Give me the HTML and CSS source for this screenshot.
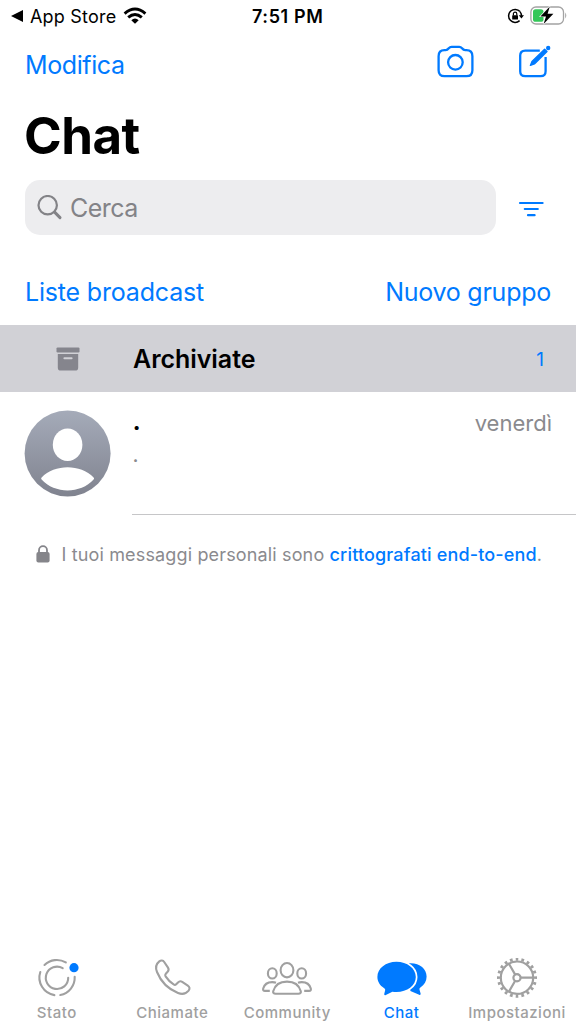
FILE: index.html
```
<!DOCTYPE html>
<html lang="it">

<head>
    <meta charset="UTF-8">
    <meta name="viewport" content="width=device-width, initial-scale=1.0">
    <title>Chat</title>

    <link rel="stylesheet" href="styles.css">
</head>

<body>
    <div class="main">
        <div class="status">
            <div class="status_left">
                <svg width="12" height="12" viewBox="0 0 12 12"><path d="M0 6L12 0V12Z" fill="#000"/></svg>
                <span class="back">App Store</span>
                <svg class="wifi" width="24" height="18" viewBox="0 0 24 18" fill="none" stroke="#000" stroke-width="2.9">
                    <path d="M1.6 6.6Q12 -2.6 22.4 6.6"/>
                    <path d="M5.2 10.4Q12 4.4 18.8 10.4"/>
                    <path d="M12 16.8L8.3 13.2Q12 10 15.7 13.2Z" fill="#000" stroke="none"/>
                </svg>
            </div>
            <span class="time">7:51 PM</span>
            <div class="status_right">
                <svg width="18" height="16" viewBox="0 0 18 16" fill="none" stroke="#000">
                    <path d="M13 3.6A6.5 6.5 0 1 0 12.6 12.6" stroke-width="1.5"/>
                    <path d="M13 3.6A6.5 6.5 0 0 1 14.4 8" stroke-width="1.5"/>
                    <path d="M11.8 7.2H17L14.4 10.4Z" fill="#000" stroke="none"/>
                    <rect x="5.2" y="7.2" width="5.8" height="4.3" rx="0.6" fill="#000" stroke="none"/>
                    <path d="M6.4 7.4V5.8a1.7 1.7 0 0 1 3.4 0V7.4" stroke-width="1.2"/>
                </svg>
                <svg width="38" height="20" viewBox="0 0 38 20">
                    <rect x="0.9" y="1" width="32.6" height="17" rx="5" fill="none" stroke="#a3a3a3" stroke-width="1.3"/>
                    <path d="M35.2 6.4Q37.4 9.4 35.2 12.4Z" fill="#a3a3a3"/>
                    <rect x="3" y="3.2" width="10.5" height="12.6" rx="2.6" fill="#34c759"/>
                    <path d="M19.8 0.4L10.4 10.4H16L13.6 18L23.4 7.8H17.6Z" fill="#000" stroke="#fff" stroke-width="1.2" paint-order="stroke"/>
                </svg>
            </div>
        </div>

        <div class="nav">
            <span class="link modifica">Modifica</span>
            <div class="nav_icons">
                <svg width="38" height="34" viewBox="0 0 38 34" fill="none" stroke="#007aff" stroke-width="2.3">
                    <path d="M7.4 5.2H8.6C10.4 5.2 10.8 4.6 11.8 3.2C12.6 2.2 13.3 1.8 14.6 1.8H22.2C23.5 1.8 24.2 2.2 25 3.2C26 4.6 26.4 5.2 28.2 5.2H29.4Q35.4 5.2 35.4 11.2V25.2Q35.4 31.2 29.4 31.2H7.4Q1.6 31.2 1.6 25.2V11.2Q1.6 5.2 7.4 5.2Z"/>
                    <circle cx="18.4" cy="17.3" r="7.3"/>
                </svg>
                <svg width="34" height="34" viewBox="0 0 34 34" fill="none" stroke="#007aff" stroke-width="2.3">
                    <path d="M21.8 5.6H7.2Q2.2 5.6 2.2 10.6V26.2Q2.2 31.2 7.2 31.2H22.6Q27.6 31.2 27.6 26.2V12"/>
                    <path d="M26.6 4.2L29 6.6L16.4 18.9L12.4 20.4L14 16.6Z" fill="#007aff" stroke-width="1.4" stroke-linejoin="round"/>
                    <circle cx="30.2" cy="3" r="2.2" fill="#007aff" stroke="none"/>
                </svg>
            </div>
        </div>

        <h1>Chat</h1>

        <div class="search_row">
            <div class="search">
                <svg width="26" height="26" viewBox="0 0 26 26" fill="none" stroke="#838387" stroke-width="2.2" stroke-linecap="round">
                    <circle cx="10.7" cy="10.2" r="9.2"/>
                    <path d="M17.6 17.1L23 22.6" stroke-width="3"/>
                </svg>
                <span class="placeholder">Cerca</span>
            </div>
            <svg class="filter" width="26" height="16" viewBox="0 0 26 16" fill="none" stroke="#007aff" stroke-width="2.2" stroke-linecap="round">
                <path d="M2 2H24.6M6.8 8H19.8M10 14.2H16.6"/>
            </svg>
        </div>

        <div class="links">
            <span class="link liste">Liste broadcast</span>
            <span class="link nuovo">Nuovo gruppo</span>
        </div>

        <div class="archive">
            <div class="archive_icon">
                <svg width="24" height="24" viewBox="0 0 24 24" fill="#85858d">
                    <rect x="0.5" y="0.4" width="23" height="5" rx="1.2"/>
                    <path fill-rule="evenodd" d="M1.8 7H22.2V20.4Q22.2 23.6 19 23.6H5Q1.8 23.6 1.8 20.4ZM8.4 10.3a1 1 0 0 0 0 2H15.6a1 1 0 0 0 0-2Z"/>
                </svg>
            </div>
            <span class="archive_name">Archiviate</span>
            <span class="archive_count">1</span>
        </div>

        <div class="chat">
            <svg class="avatar" width="86" height="86" viewBox="0 0 86 86">
                <defs>
                    <linearGradient id="grey" x1="0" y1="0" x2="0" y2="1">
                        <stop offset="0" stop-color="#a5abb9"/>
                        <stop offset="1" stop-color="#80838f"/>
                    </linearGradient>
                </defs>
                <circle cx="42.6" cy="43.4" r="43" fill="url(#grey)"/>
                <ellipse cx="42.6" cy="34.7" rx="14.8" ry="16.2" fill="#fff"/>
                <path d="M16.6 67.4Q15.6 68.3 16.6 69.5C29.6 84 55.6 84 68.6 69.5Q69.6 68.3 68.6 67.4C55.6 54 29.6 54 16.6 67.4Z" fill="#fff"/>
            </svg>
            <div class="chat_body">
                <div class="chat_text">
                    <span class="chat_name">.</span>
                    <span class="chat_last">.</span>
                </div>
                <span class="chat_date">venerdì</span>
            </div>
        </div>

        <div class="notice">
            <svg width="14" height="18" viewBox="0 0 14 18">
                <rect x="0.4" y="7" width="13.2" height="10.4" rx="2" fill="#85858a"/>
                <path d="M3 8V5.2a4 4 0 0 1 8 0V8" fill="none" stroke="#85858a" stroke-width="1.8"/>
            </svg>
            <span class="notice_text">I tuoi messaggi personali sono <b>crittografati end-to-end</b>.</span>
        </div>

        <div class="tabs">
            <div class="tab">
                <svg width="44" height="44" viewBox="0 0 44 44" fill="none" stroke="#a0a0a0" stroke-width="2.1" stroke-linecap="round">
                    <path d="M9.5 7A17.8 17.8 0 0 1 30.8 4.4"/>
                    <path d="M5.3 14A17.8 17.8 0 0 0 19.4 37.1"/>
                    <path d="M25.3 37A17.8 17.8 0 0 0 39.7 18.7"/>
                    <path d="M27.7 10.2A11.2 11.2 0 1 0 33.2 19.7"/>
                    <circle cx="39" cy="9.7" r="4.6" fill="#007aff" stroke="none"/>
                </svg>
                <span>Stato</span>
            </div>
            <div class="tab">
                <svg width="44" height="44" viewBox="0 0 44 44" fill="none" stroke="#a0a0a0" stroke-width="2.1" stroke-linejoin="round">
                    <path d="M9.3 3.4C11 2 13 2.2 14.2 4L18 9.6C19 11.2 18.8 12.5 17.6 13.8L15.8 15.7C15 16.6 15 17.4 15.6 18.4C17.8 21.8 20.2 24.2 23.6 26.4C24.6 27 25.4 27 26.2 26.2L28 24.4C29.3 23.1 30.6 22.8 32.2 23.8L37.8 27.6C39.8 29 40 30.8 38.6 32.6C35.8 36 32.4 36.8 28 35C18.6 31.2 10.8 23.4 7 14C5.2 9.6 5.8 6.2 9.3 3.4Z"/>
                </svg>
                <span>Chiamate</span>
            </div>
            <div class="tab">
                <svg width="52" height="44" viewBox="0 0 52 44" fill="none" stroke="#a0a0a0" stroke-width="2.1" stroke-linejoin="round">
                    <ellipse cx="26" cy="12.2" rx="6.4" ry="7.2"/>
                    <ellipse cx="11.3" cy="15.4" rx="4.4" ry="5.1"/>
                    <ellipse cx="40.7" cy="15.4" rx="4.4" ry="5.1"/>
                    <path d="M14.6 35.7H37.4Q40.4 35.7 39.8 33.3C38 26.7 33 23.6 26 23.6S14 26.7 12.2 33.3Q11.6 35.7 14.6 35.7Z"/>
                    <path d="M8.8 32.9H4Q1.6 32.9 2.2 30.5C3.4 26.1 6.8 24.1 11.2 24.1C12.7 24.1 14 24.3 15 24.7"/>
                    <path d="M43.2 32.9H48Q50.4 32.9 49.8 30.5C48.6 26.1 45.2 24.1 40.8 24.1C39.3 24.1 38 24.3 37 24.7"/>
                </svg>
                <span>Community</span>
            </div>
            <div class="tab active">
                <svg width="52" height="44" viewBox="0 0 52 44" fill="#007aff">
                    <path d="M33 5.4C43 4.6 50.6 10.4 50.6 18.6C50.6 23.2 48.4 27 44.4 29.6C43.4 30.3 43.4 31 43.6 32L44.6 35.6C44.8 36.8 44.2 37.3 43.2 36.8L34.4 33Z"/>
                    <path d="M20.4 3.8C31.2 3.8 39.8 10.4 39.8 19S31.2 34 20.4 34C19 34 17.6 33.9 16.4 33.7L9.8 37C8.6 37.5 8 36.9 8.3 35.8L9.1 32.4C9.3 31.4 9.1 30.8 8.2 30.2C3.8 27.4 1.4 23.6 1.4 19C1.4 10.4 9.8 3.8 20.4 3.8Z" stroke="#fff" stroke-width="3.4" paint-order="stroke"/>
                </svg>
                <span>Chat</span>
            </div>
            <div class="tab">
                <svg width="44" height="44" viewBox="0 0 44 44" fill="none" stroke="#a0a0a0" stroke-width="2.2">
                    <circle cx="22" cy="19.7" r="16.2"/>
                    <!-- gear teeth -->
                    <circle cx="22" cy="19.7" r="18.5" stroke-width="3" pathLength="200" stroke-dasharray="4.6 5.4" stroke-dashoffset="2.3"/>
                    <circle cx="22" cy="19.7" r="3.6"/>
                    <path d="M25.6 19.7H38.2M20.2 16.6L13.9 5.7M20.2 22.8L13.9 33.7"/>
                </svg>
                <span>Impostazioni</span>
            </div>
        </div>
    </div>
</body>

</html>
```
FILE: styles.css
```
* {
    box-sizing: border-box;
}

body {
    margin: 0;
    font-family: Inter, "Liberation Sans", sans-serif;
    background-color: #fff;
}

svg {
    display: block;
    flex-shrink: 0;
}

.main {
    width: 576px;
    height: 1024px;
    overflow: hidden;
    display: flex;
    flex-direction: column;
}

.status {
    height: 32px;
    padding: 0 8px 0 11px;
    display: grid;
    grid-template-columns: 241px auto 1fr;
    align-items: center;
}

.status_left {
    display: flex;
    align-items: center;
}

.back {
    font-size: 18px;
    letter-spacing: 0.2px;
    margin-left: 7px;
    width: 86px;
    white-space: nowrap;
}

.wifi {
    margin-left: 7px;
}

.time {
    font-size: 18px;
    font-weight: 600;
    letter-spacing: 0.6px;
}

.status_right {
    display: flex;
    justify-content: flex-end;
    align-items: center;
    gap: 5px;
}

.nav {
    height: 64px;
    padding: 2px 24px 0 25px;
    display: flex;
    justify-content: space-between;
    align-items: center;
}

.link {
    color: #007aff;
    font-size: 25px;
    white-space: nowrap;
}

.modifica {
    letter-spacing: -0.4px;
}

.liste {
    letter-spacing: -0.18px;
}

.nuovo {
    letter-spacing: -0.25px;
}

.nav_icons {
    display: flex;
    gap: 43px;
    margin-bottom: 6px;
}

h1 {
    margin: 0;
    padding-left: 24px;
    height: 84px;
    line-height: 80px;
    font-size: 51px;
    font-weight: 700;
    letter-spacing: -0.5px;
}

.search_row {
    height: 55px;
    padding: 0 32px 0 25px;
    display: flex;
    justify-content: space-between;
    align-items: center;
}

.search {
    width: 471px;
    height: 55px;
    padding-left: 12px;
    border-radius: 15px;
    background-color: #ededef;
    display: flex;
    align-items: center;
    gap: 7px;
}

.filter {
    margin-top: 3px;
}

.placeholder {
    font-size: 25px;
    letter-spacing: -0.5px;
    color: #838387;
}

.links {
    height: 90px;
    padding: 24px 25px 0;
    display: flex;
    justify-content: space-between;
    align-items: center;
}

.archive {
    height: 67px;
    padding-right: 32px;
    background-color: #d1d1d6;
    display: flex;
    align-items: center;
}

.archive_icon {
    width: 133px;
    padding-left: 55.5px;
}

.archive_name {
    flex: 1;
    font-size: 25px;
    font-weight: 600;
    letter-spacing: -0.05px;
}

.archive_count {
    font-size: 19px;
    padding-top: 1px;
    color: #007aff;
}

.chat {
    height: 123px;
    display: flex;
}

.avatar {
    margin: 18px 21px 0 25px;
    overflow: visible;
}

.chat_body {
    flex: 1;
    padding-right: 24px;
    border-bottom: 1px solid #c6c6c8;
    display: flex;
    justify-content: space-between;
}

.chat_text {
    display: flex;
    flex-direction: column;
    padding: 13px 0 0 0.5px;
}

.chat_name {
    font-size: 26px;
    font-weight: 600;
    line-height: 32px;
}

.chat_last {
    font-size: 21px;
    line-height: 36px;
    color: #8a8a8e;
}

.chat_date {
    font-size: 22px;
    line-height: 30px;
    padding-top: 16px;
    color: #8a8a8e;
}

.notice {
    height: 78px;
    padding-left: 36px;
    display: flex;
    align-items: center;
}

.notice_text {
    margin-left: 11.5px;
    font-size: 18px;
    letter-spacing: 0.15px;
    color: #8a8a8e;
    white-space: nowrap;
}

.notice_text b {
    font-weight: 500;
    color: #007aff;
}

.tabs {
    margin-top: auto;
    height: 66px;
    display: grid;
    grid-template-columns: 113.5px 117.5px 112.5px 116px 115px;
}

.tab {
    display: flex;
    flex-direction: column;
    align-items: center;
    color: #a0a0a0;
    font-size: 15px;
    font-weight: 500;
    letter-spacing: 0.5px;
}

.tab span {
    line-height: 20px;
    margin-top: 1px;
    white-space: nowrap;
}

.tab.active {
    color: #007aff;
}
```
